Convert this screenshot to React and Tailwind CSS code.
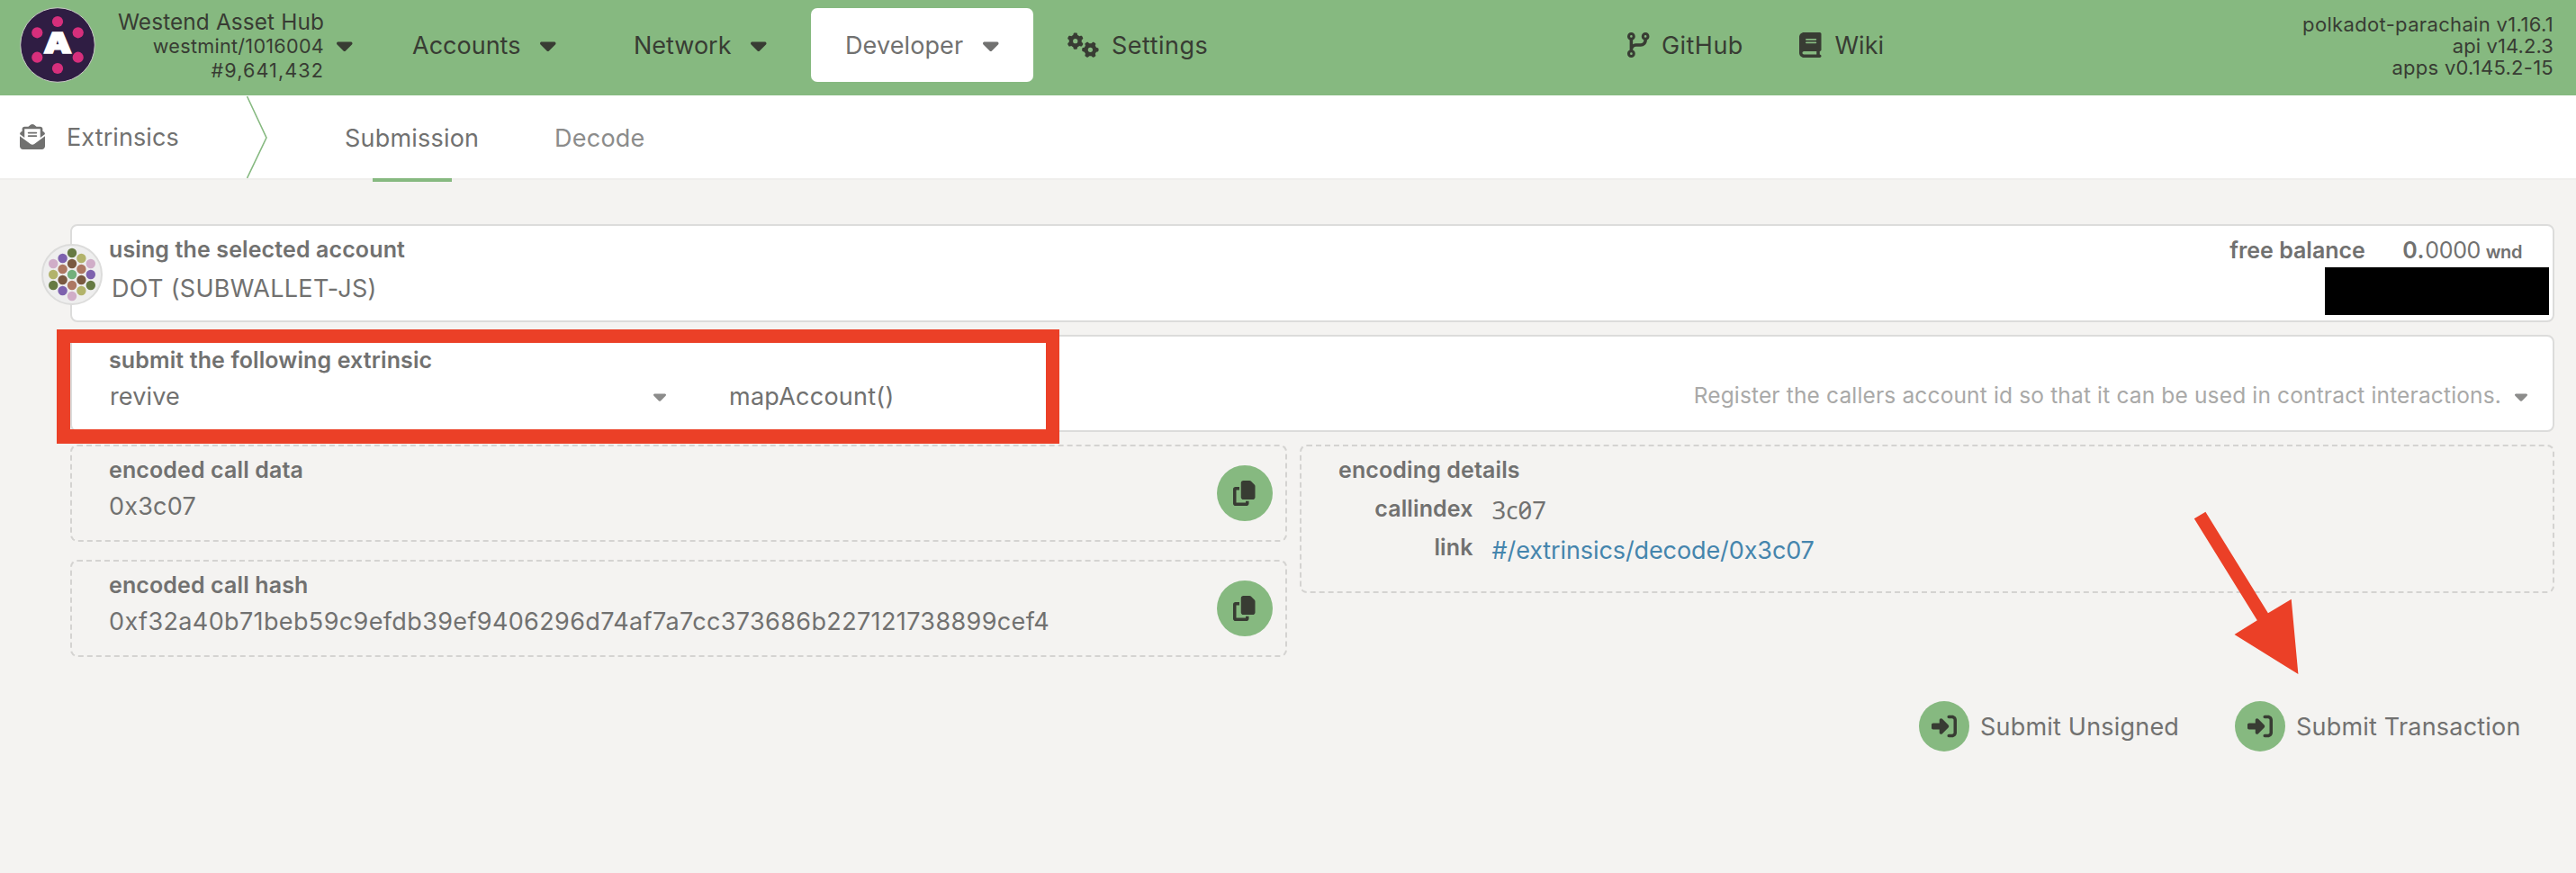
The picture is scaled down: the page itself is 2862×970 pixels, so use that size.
import React from 'react';
import {
  FaCaretDown,
  FaCodeBranch,
  FaBook,
  FaGears,
  FaCopy,
  FaRightToBracket,
  FaEnvelopeOpenText,
} from 'react-icons/fa6';

const LOGO_DOTS = [
  [42, 16],
  [64.7, 28.3],
  [64.7, 55.7],
  [42, 68],
  [19.3, 55.7],
  [19.3, 28.3],
];

function ChainLogo() {
  return (
    <svg viewBox="0 0 84 84" className="h-[84px] w-[84px] shrink-0">
      <circle cx="42" cy="42" r="41.3" fill="#2f1d43" stroke="#c9cbc6" strokeWidth="1" />
      {LOGO_DOTS.map(([x, y]) => (
        <circle key={`${x}-${y}`} cx={x} cy={y} r="6.1" fill="#d62f7c" />
      ))}
      <text
        transform="translate(42 51.2) scale(1.22 1)"
        textAnchor="middle"
        fontFamily="Inter, sans-serif"
        fontWeight="900"
        fontSize="32"
        fill="#fff"
        stroke="#fff"
        strokeWidth="1.6"
      >
        A
      </text>
    </svg>
  );
}

const C = {
  green: '#667a43',
  olive: '#b2b36b',
  purple: '#7e62ae',
  pink: '#d0adc8',
  rust: '#ad7862',
  brown: '#7a5a41',
  mint: '#73b07c',
};

const IDENTICON = [
  [0, -24, C.green],
  [0, -12, C.brown],
  [0, 0, C.mint],
  [0, 12, C.rust],
  [0, 24, C.pink],
  [-10.4, -18, C.purple],
  [-10.4, -6, C.rust],
  [-10.4, 6, C.brown],
  [-10.4, 18, C.purple],
  [10.4, -18, C.olive],
  [10.4, -6, C.rust],
  [10.4, 6, C.brown],
  [10.4, 18, C.olive],
  [-20.8, -12, C.pink],
  [-20.8, 0, C.olive],
  [-20.8, 12, C.green],
  [20.8, -12, C.pink],
  [20.8, 0, C.purple],
  [20.8, 12, C.green],
];

function Identicon() {
  return (
    <svg viewBox="-34 -34 68 68" className="absolute top-[20px] -left-[34px] h-[68px] w-[68px]">
      <circle r="33" fill="#eeeeee" stroke="#dcdcdb" strokeWidth="2" />
      {IDENTICON.map(([x, y, fill]) => (
        <circle key={`${x},${y}`} cx={x} cy={y} r="5.2" fill={fill} />
      ))}
    </svg>
  );
}

const Caret = () => <FaCaretDown className="h-7 w-[17.5px] shrink-0" />;
const SmallCaret = () => <FaCaretDown className="h-[22.4px] w-[14px] shrink-0 text-[#8c8c8b]" />;

function Header() {
  return (
    <header className="flex h-[106px] items-center bg-[#86b980] pr-[25px] pb-[6px] text-[27px] leading-8 text-[#383c33]">
      <div className="flex w-[1808px] items-center pl-[22px]">
        <ChainLogo />
        <div className="w-[254px] pt-[2px] text-right text-[21.6px] leading-[27px]">
          <div className="text-[24.4px] tracking-[0.11px]">Westend Asset Hub</div>
          <div className="tracking-[0.27px]">westmint/1016004</div>
          <div className="tracking-[1.1px]">#9,641,432</div>
        </div>
        <div className="ml-[14px]">
          <Caret />
        </div>
        <span className="ml-[66.5px] w-[142px] pt-[2px]">Accounts</span>
        <Caret />
        <span className="ml-[86.5px] w-[130px] pt-[2px]">Network</span>
        <Caret />
        <div className="ml-[49.5px] flex h-[82px] w-[247px] items-center rounded-[7px] bg-white pl-[38px] text-[#717170]">
          <span className="w-[153px] pt-[2px] tracking-[0.11px]">Developer</span>
          <Caret />
        </div>
        <FaGears className="ml-[38px] h-7 w-[35px]" />
        <span className="ml-[14px] pt-[2px] tracking-[0.5px]">Settings</span>
      </div>
      <FaCodeBranch className="h-7 w-[24.5px]" />
      <span className="ml-[13.5px] w-[153px] pt-[2px] tracking-[0.45px]">GitHub</span>
      <FaBook className="h-7 w-[24.5px]" />
      <span className="ml-[15px] pt-[2px]">Wiki</span>
      <div className="ml-auto pt-[2px] text-right text-[22px] leading-6">
        <div className="tracking-[0.34px]">polkadot-parachain v1.16.1</div>
        <div className="tracking-[0.1px]">api v14.2.3</div>
        <div className="tracking-[0.26px]">apps v0.145.2-15</div>
      </div>
    </header>
  );
}

function Tabs() {
  return (
    <nav className="flex h-[94px] items-center border-b-2 border-[#efeeec] bg-white pl-[22px] text-[27px] leading-8 text-[#717170]">
      <FaEnvelopeOpenText className="h-7 w-7" />
      <span className="ml-[24px] w-[200px] pt-[2px] tracking-[0.1px]">Extrinsics</span>
      <svg viewBox="0 0 24 92" className="h-[92px] w-[24px]" fill="none">
        <path d="M0.5 1 L22 47 L0.5 92" stroke="#86b980" strokeWidth="1.6" />
      </svg>
      <div className="relative ml-[85px] flex h-full w-[233px] items-center">
        <span className="pt-[4px] tracking-[0.2px]">Submission</span>
        <div className="absolute top-[92px] left-[31px] h-[4px] w-[88px] bg-[#86b980]" />
      </div>
      <span className="pt-[4px] tracking-[0.25px] text-[#8c8c8b]">Decode</span>
    </nav>
  );
}

function Title({ children }) {
  return <div className="text-[25px] leading-8 font-semibold tracking-[0.12px]">{children}</div>;
}

function AccountCard() {
  return (
    <section className="relative flex h-[109px] justify-between rounded-[8px] border-2 border-[#dcdcdb] bg-white pt-[10px] pr-[34px] pl-[41px]">
      <Identicon />
      <div>
        <Title>using the selected account</Title>
        <div className="mt-[12px] ml-[3px] tracking-[0.32px]">DOT (SUBWALLET-JS)</div>
      </div>
      <div className="flex h-8 translate-y-px items-baseline text-[25px]">
        <span className="w-[192px] font-semibold">free balance</span>
        <span className="w-[25px] font-semibold tracking-[0.6px]">0.</span>
        <span className="w-[67.5px] tracking-[-0.3px]">0000</span>
        <span className="text-[20px] font-semibold tracking-[-0.4px]">wnd</span>
      </div>
      <div className="absolute top-[46px] right-[4px] h-[53px] w-[249px] bg-black" />
    </section>
  );
}

function ExtrinsicCard() {
  return (
    <section className="relative mt-[14px] h-[108px] rounded-[8px] border-2 border-[#dcdcdb] bg-white pt-[10px] pr-[28px] pl-[41px]">
      <Title>submit the following extrinsic</Title>
      <div className="mt-[7px] flex items-center">
        <span className="ml-[1px] w-[603.5px] pt-[2px] tracking-[0.14px]">revive</span>
        <SmallCaret />
        <span className="ml-[70.5px] pt-[2px] tracking-[0.25px]">mapAccount()</span>
        <span className="mr-[15px] -mt-[3px] ml-auto text-[24.5px] tracking-[0.15px] text-[#a9a9a8]">
          Register the callers account id so that it can be used in contract interactions.
        </span>
        <SmallCaret />
      </div>
      <div className="absolute -top-[8px] -left-[17.5px] h-[127px] w-[1114.5px] border-x-[15px] border-t-[15px] border-b-[16px] border-[#eb4027]" />
    </section>
  );
}

function CopyBox({ title, value, className }) {
  return (
    <div className="flex h-[108px] items-start rounded-[8px] border-2 border-dashed border-[#d4d3d1] pt-[10px] pr-[14.5px] pl-[41px]">
      <div className="flex-1">
        <Title>{title}</Title>
        <div className={`mt-[9px] ${className}`}>{value}</div>
      </div>
      <button className="mt-[11px] flex h-[62px] w-[62px] items-center justify-center rounded-full bg-[#86b980] text-[#383c33]">
        <FaCopy className="h-7 w-[24.5px]" />
      </button>
    </div>
  );
}

function EncodingDetails() {
  return (
    <div className="h-[165px] rounded-[8px] border-2 border-dashed border-[#d4d3d1] pt-[10px] pl-[41px]">
      <Title>encoding details</Title>
      <div className="mt-[11px] flex h-8">
        <div className="w-[149.5px] text-right">
          <Title>callindex</Title>
        </div>
        <span className="mt-[2px] ml-[21px] font-['Noto_Sans',sans-serif] text-[27.5px] slashed-zero">3c07</span>
      </div>
      <div className="mt-[11px] flex h-8">
        <div className="w-[149.5px] text-right">
          <Title>link</Title>
        </div>
        <a className="mt-[4px] ml-[21px] tracking-[-0.1px] text-[#4585ad]">#/extrinsics/decode/0x3c07</a>
      </div>
    </div>
  );
}

function SubmitButton({ label, className }) {
  return (
    <div className={`flex items-center gap-3 ${className}`}>
      <span className="flex h-14 w-14 items-center justify-center rounded-full bg-[#86b980] text-[#383c33]">
        <FaRightToBracket className="h-7 w-7" />
      </span>
      <span className="pt-[2px] tracking-[0.2px]">{label}</span>
    </div>
  );
}

export default function App() {
  return (
    <div className="relative h-[970px] w-[2862px] overflow-hidden bg-[#f4f3f1] font-['Inter','Liberation_Sans',sans-serif] whitespace-nowrap">
      <Header />
      <Tabs />
      <main className="pt-[49px] pr-[24px] pl-[78px] text-[27px] leading-8 text-[#717170]">
        <AccountCard />
        <ExtrinsicCard />
        <div className="mt-[14px] grid grid-cols-[1352px_1394px] items-start gap-[14px]">
          <div className="flex flex-col gap-5">
            <CopyBox title="encoded call data" value="0x3c07" className="tracking-[0.22px]" />
            <CopyBox
              title="encoded call hash"
              value="0xf32a40b71beb59c9efdb39ef9406296d74af7a7cc373686b227121738899cef4"
              className="tracking-[0.37px]"
            />
          </div>
          <EncodingDetails />
        </div>
        <div className="mt-[49px] flex pl-[2054px]">
          <SubmitButton label="Submit Unsigned" className="w-[351px]" />
          <SubmitButton label="Submit Transaction" className="" />
        </div>
      </main>
      <svg viewBox="0 0 120 184" className="absolute top-[567px] left-[2436px] h-[184px] w-[120px]">
        <path
          d="M1.8 9.3 L14.4 1.8 L83.9 114.3 L109.7 98.7 L117.4 182 L46.5 138 L71.8 122.3 Z"
          fill="#eb4027"
        />
      </svg>
    </div>
  );
}
